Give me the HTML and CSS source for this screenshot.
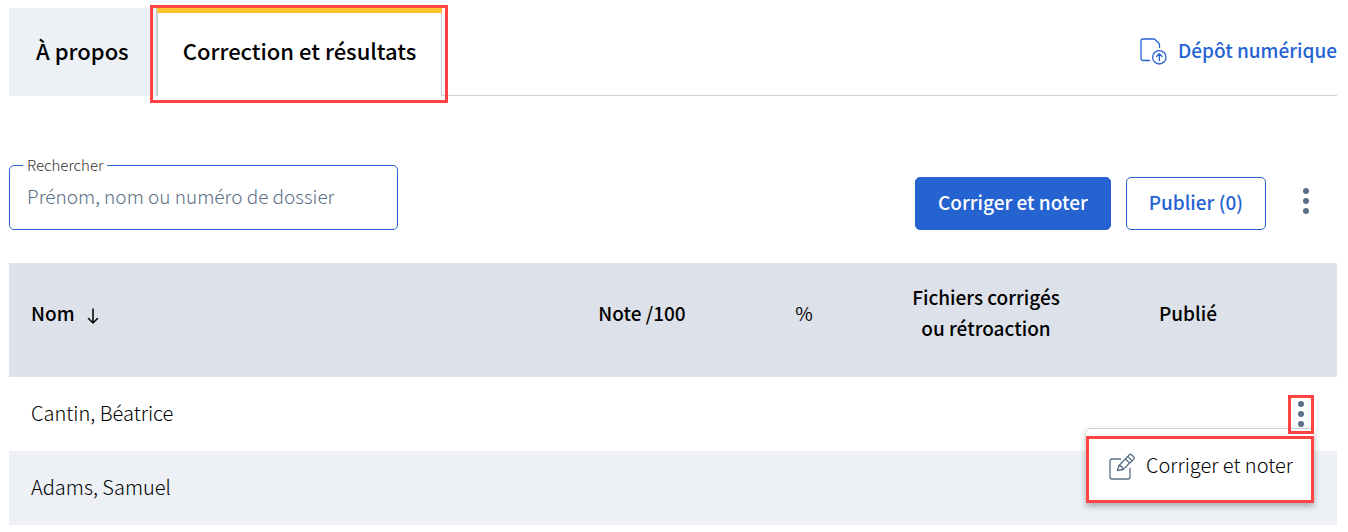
FILE: index.html
```html
<!DOCTYPE html>
<html lang="fr">
<head>
  <meta charset="UTF-8">
  <meta name="viewport" content="width=device-width, initial-scale=1.0">
  <title>Correction et résultats</title>
  <link rel="stylesheet" href="styles.css">
</head>
<body>
  <!-- Onglets -->
  <header class="tabs">
    <nav class="tab-list">
      <a class="tab" href="#apropos">À propos</a>
      <a class="tab active" href="#correction">Correction et résultats</a>
    </nav>
    <a class="depot" href="#depot">
      <svg width="27" height="27" viewBox="0 0 27 27" fill="none" stroke="currentColor" stroke-width="1.3" stroke-linecap="round" stroke-linejoin="round">
        <path d="M9.5 22.500H3A2 2 0 0 1 1 20.500V3A2 2 0 0 1 3 1H14.500L19.500 6V9.500"/>
        <circle cx="19.300" cy="19.300" r="6.700"/>
        <path d="M19.300 22.700V16M16.500 18.500L19.300 15.800L22.100 18.500"/>
      </svg>
      <span>Dépôt numérique</span>
    </a>
  </header>

  <main>
    <div class="toolbar">
      <fieldset class="search">
        <legend><label for="search">Rechercher</label></legend>
        <input id="search" type="text" placeholder="Prénom, nom ou numéro de dossier">
      </fieldset>
      <div class="actions">
        <button class="btn btn-primary" type="button">Corriger et noter</button>
        <button class="btn" type="button">Publier (0)</button>
        <button class="kebab" type="button" aria-label="Plus d'actions">
          <svg width="6" height="26" viewBox="0 0 6 26" fill="currentColor">
            <circle cx="3" cy="3" r="3"/><circle cx="3" cy="13" r="3"/><circle cx="3" cy="23" r="3"/>
          </svg>
        </button>
      </div>
    </div>

    <table class="results">
      <colgroup>
        <col>
        <col class="col-note">
        <col class="col-percent">
        <col class="col-files">
        <col class="col-published">
        <col class="col-menu">
      </colgroup>
      <thead>
        <tr>
          <th class="name" scope="col">
            Nom
            <svg class="sort" width="12" height="16" viewBox="0 0 12 16" fill="none" stroke="currentColor" stroke-width="1.5" stroke-linecap="round" stroke-linejoin="round">
              <path d="M6 1V15M1.500 10.500L6 15L10.500 10.500"/>
            </svg>
          </th>
          <th scope="col">Note /100</th>
          <th class="percent" scope="col">%</th>
          <th scope="col">Fichiers corrigés<br>ou rétroaction</th>
          <th scope="col">Publié</th>
          <th></th>
        </tr>
      </thead>
      <tbody>
        <tr>
          <td class="name">Cantin, Béatrice</td>
          <td></td>
          <td></td>
          <td></td>
          <td></td>
          <td>
            <div class="dropdown">
              <button class="kebab marked" type="button" aria-label="Actions pour Béatrice Cantin">
                <svg width="6" height="26" viewBox="0 0 6 26" fill="currentColor">
                  <circle cx="3" cy="3" r="3"/><circle cx="3" cy="13" r="3"/><circle cx="3" cy="23" r="3"/>
                </svg>
              </button>
              <div class="menu">
                <button class="menu-item marked" type="button">
                  <svg width="27" height="27" viewBox="0 0 27 27" fill="none" stroke="currentColor" stroke-width="1.3" stroke-linecap="round" stroke-linejoin="round">
                    <path d="M11.500 6H3A2 2 0 0 0 1 8V24A2 2 0 0 0 3 26H19A2 2 0 0 0 21 24V15.500"/>
                    <path d="M8.500 17.500L10 12.500L20.500 1.800Q21.500 .8 22.600 1.800L24.800 4Q25.800 5 24.800 6.100L14 16.500Z"/>
                    <path d="M16.500 6L20.500 10M18.800 3.600L23 7.800M10 12.500Q13.500 13 14 16.500"/>
                  </svg>
                  <span>Corriger et noter</span>
                </button>
              </div>
            </div>
          </td>
        </tr>
        <tr>
          <td class="name">Adams, Samuel</td>
          <td></td>
          <td></td>
          <td></td>
          <td></td>
          <td></td>
        </tr>
      </tbody>
    </table>
  </main>
</body>
</html>
```
FILE: styles.css
```css
* {
  box-sizing: border-box;
}
body {
  margin: 0;
  padding: 8px 11px 8px 9px;
  background: #fff;
  color: #000;
  font-family: "Noto Sans CJK JP", "Noto Sans", sans-serif;
  font-size: 19px;
  font-weight: 300;
  line-height: 31px;
}
button, input {
  font: inherit;
  color: inherit;
}
svg {
  display: block;
  flex: none;
}

/* Tabs */
.tabs {
  display: flex;
  justify-content: space-between;
  height: 88px;
  box-shadow: inset 0 -1px #c8d0da;
}
.tab-list {
  display: flex;
}
.tab {
  display: flex;
  align-items: center;
  padding: 0 27px 4px;
  background: #edf1f6;
  color: #000;
  font-size: 22px;
  font-weight: 500;
  text-decoration: none;
  white-space: nowrap;
}
.tab.active {
  position: relative;
  padding: 0 25px 4px;
  background: #fff;
  border-left: 2px solid #c8d0da;
  border-right: 1px solid #c8d0da;
}
.tab.active::before {
  content: "";
  position: absolute;
  top: 0;
  left: -1px;
  right: -1px;
  height: 5px;
  background: #ffc32d;
}
.tab.active::after {
  content: "";
  position: absolute;
  top: -3px;
  right: -7px;
  bottom: -7px;
  left: -8px;
  border: 3px solid #ff4242;
}
.depot {
  display: flex;
  align-items: center;
  gap: 11px;
  padding-bottom: 2px;
  color: #2563d1;
  font-weight: 500;
  text-decoration: none;
  white-space: nowrap;
}
.depot span {
  padding-bottom: 4px;
}

/* Search and buttons */
.toolbar {
  display: flex;
  justify-content: space-between;
  align-items: flex-end;
  margin: 60px 0 33px;
}
.search {
  width: 389px;
  height: 74px;
  margin: 0;
  padding: 0;
  border: 1px solid #2563d1;
  border-radius: 5px;
}
.search legend {
  margin-left: 13px;
  padding: 0 4px;
  color: #333;
  font-size: 15px;
  line-height: 18px;
}
.search input {
  display: block;
  width: 100%;
  height: 42px;
  padding: 0 17px;
  border: 0;
  background: none;
  outline: none;
}
.search input::placeholder {
  color: #5a6f88;
  opacity: 1;
}
.actions {
  display: flex;
  gap: 15px;
}
.btn {
  height: 53px;
  padding: 0 22px 4px;
  border: 1px solid #2563d1;
  border-radius: 5px;
  background: #fff;
  color: #2563d1;
  font-weight: 500;
  white-space: nowrap;
}
.btn-primary {
  background: #2563d1;
  color: #fff;
}
.kebab {
  display: flex;
  justify-content: center;
  align-items: center;
  width: 26px;
  height: 39px;
  padding: 0;
  border: 0;
  background: none;
  color: #5a6f88;
}
.actions .kebab {
  height: 48px;
  margin: 0 18px 0 12px;
}
.kebab.marked,
.menu-item.marked {
  border: 3px solid #ff4242;
}

/* Results table */
.results {
  width: 100%;
  border-collapse: collapse;
  table-layout: fixed;
}
.col-note {
  width: 176px;
}
.col-percent {
  width: 148px;
}
.col-files {
  width: 216px;
}
.col-published {
  width: 188px;
}
.col-menu {
  width: 55px;
}
th, td {
  padding: 0;
}
th {
  height: 114px;
  padding-bottom: 16px;
  background: #dde1e9;
  font-weight: 500;
}
td {
  height: 74px;
}
.name {
  padding-left: 22px;
  text-align: left;
}
td.name {
  padding-bottom: 4px;
  font-size: 20px;
}
.sort {
  display: inline-block;
  margin-left: 8px;
  vertical-align: -3px;
}
.percent {
  font-weight: 400;
}
tbody tr:nth-child(even) {
  background: #edf1f6;
}

/* Row menu */
.dropdown {
  position: relative;
  width: 26px;
  margin: 0 23px 0 auto;
}
.dropdown .kebab {
  position: relative;
  z-index: 2;
}
.menu {
  position: absolute;
  top: 33px;
  right: 0;
  z-index: 1;
  padding-top: 7px;
  border-top: 1px solid #c8d0da;
  border-radius: 5px 5px 0 0;
  background: #fff;
  box-shadow: 0 3px 6px rgba(0, 0, 0, 0.3);
}
.menu-item {
  display: flex;
  align-items: center;
  gap: 10px;
  height: 67px;
  padding: 0 18px 6px 20px;
  background: #fff;
  color: #000;
  font-size: 20px;
  white-space: nowrap;
}
.menu-item svg {
  color: #5a6f88;
}
.menu-item span {
  padding-bottom: 4px;
}
```
